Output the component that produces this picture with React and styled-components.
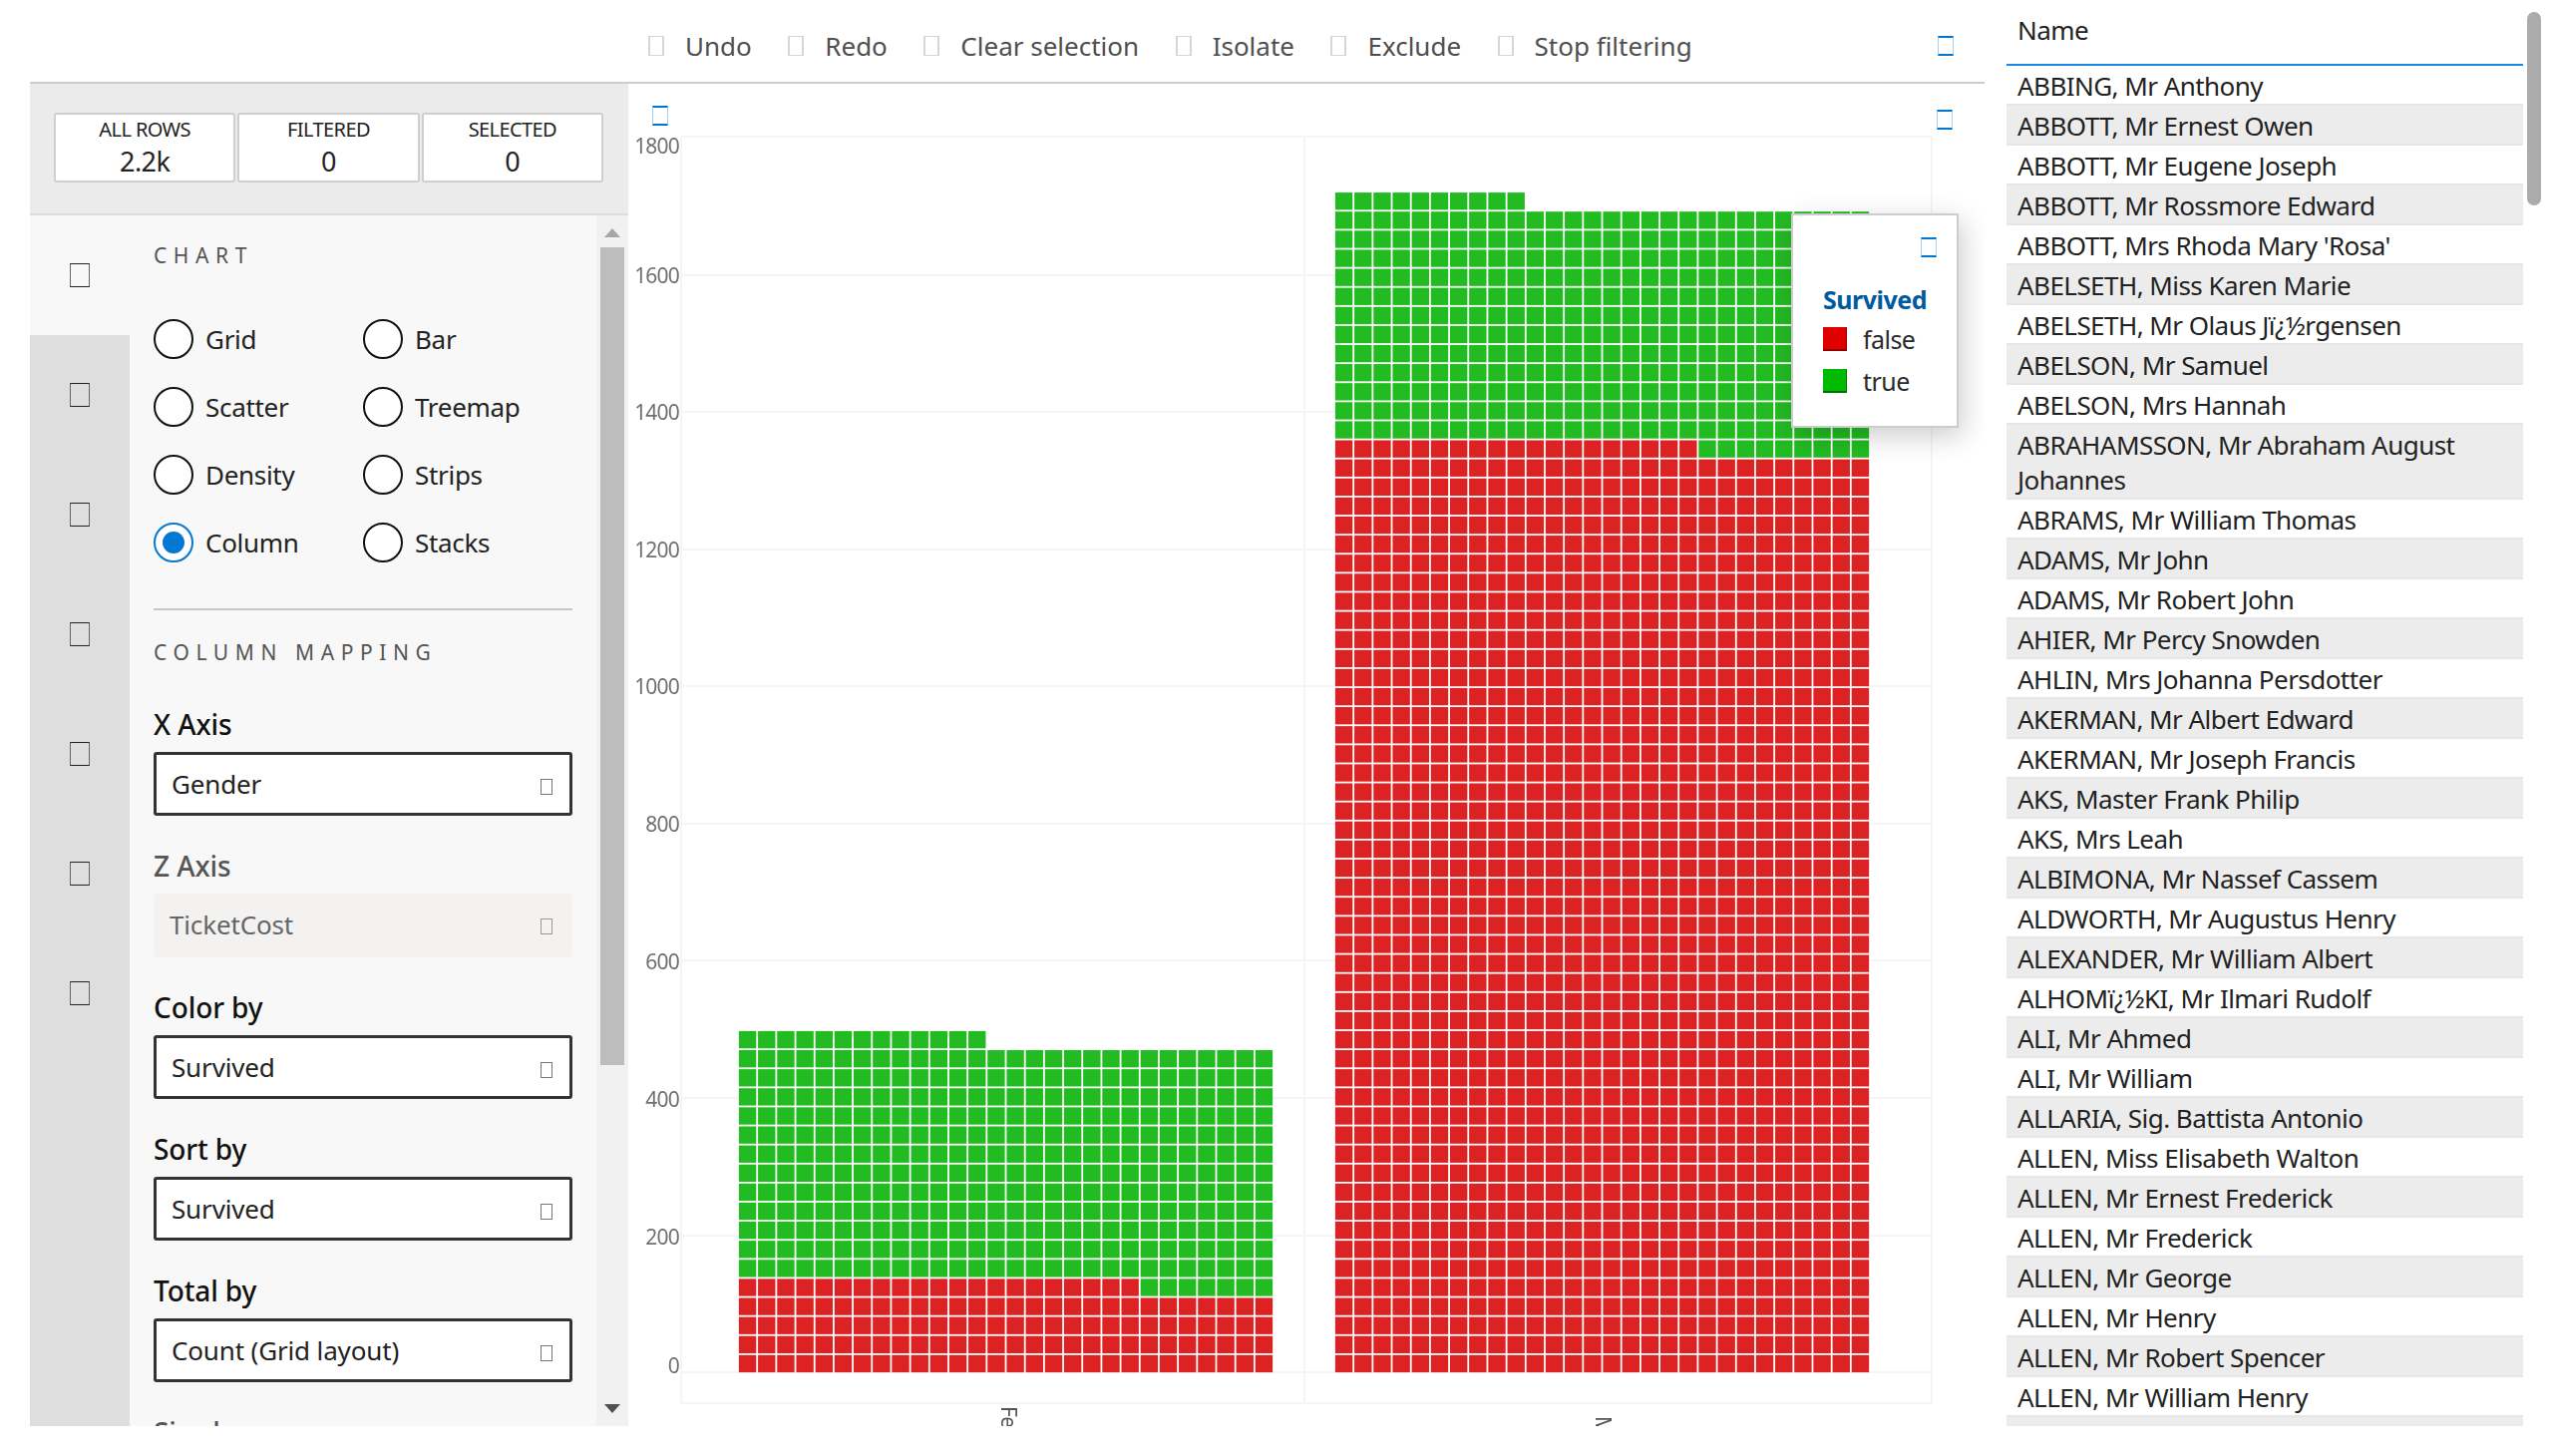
import React from "react";
import styled, { createGlobalStyle } from "styled-components";

const GlobalStyle = createGlobalStyle`
    html, body {
        margin: 0;
        background: #fff;
    }
    * {
        box-sizing: border-box;
    }
`;

const Page = styled.div`
    display: flex;
    height: 1430px;
    padding-left: 30px;
    overflow: hidden;
    font-family: "Noto Sans", "Open Sans", sans-serif;
    font-size: 26px;
    letter-spacing: -0.55px;
    color: #222;
`;

const Main = styled.div`
    display: flex;
    flex-direction: column;
    width: 1960px;
    flex: none;
`;

const Toolbar = styled.div`
    display: flex;
    align-items: center;
    gap: 36.5px;
    height: 84px;
    padding: 10px 31px 0 620px;
    border-bottom: 2px solid #cccccc;
    letter-spacing: 0;
    color: #4f4f4f;
`;

const ToolItem = styled.div`
    display: flex;
    align-items: center;
    gap: 21px;
`;

const GlyphBox = styled.span`
    display: block;
    flex: none;
    width: ${(p) => p.$w || 16}px;
    height: ${(p) => p.$h || 20}px;
`;

const GreyGlyph = styled(GlyphBox)`
    border: solid #d6d6d6;
    border-width: 1px 2px;
`;

const BlueGlyph = styled(GlyphBox)`
    border-style: solid;
    border-color: #0078d4 #a9d0f2;
    border-width: 2px 1px;
`;

const TabGlyph = styled(GlyphBox)`
    border-style: solid;
    border-color: #222 #666;
    border-width: 1px;
`;

const ChevronGlyph = styled(GlyphBox)`
    margin-top: 5px;
    border: 1px solid ${(p) => (p.$muted ? "#999" : "#777")};
`;

const PushRight = styled.div`
    margin-left: auto;
`;

const Body = styled.div`
    display: flex;
    flex: 1;
    min-height: 0;
`;

const SidePanel = styled.div`
    display: flex;
    flex-direction: column;
    width: 600px;
    flex: none;
`;

const StatsBand = styled.div`
    display: flex;
    gap: 2px;
    height: 132px;
    padding: 29px 25px 0 24px;
    background: #ebebeb;
    border-bottom: 2px solid #dcdcdc;
`;

const StatBox = styled.div`
    display: flex;
    flex: 1;
    flex-direction: column;
    align-items: center;
    height: 70px;
    background: #fff;
    border: 2px solid #cfcfcf;
    border-radius: 3px;
    color: #222;
`;

const StatLabel = styled.div`
    font-size: 20px;
    line-height: 30px;
    letter-spacing: -0.6px;
`;

const StatValue = styled.div`
    font-size: 27px;
    line-height: 34px;
`;

const PanelBody = styled.div`
    display: flex;
    flex: 1;
    min-height: 0;
`;

const TabRail = styled.div`
    width: 100px;
    flex: none;
    background: #dedede;
`;

const Tab = styled.div`
    display: flex;
    align-items: center;
    justify-content: center;
    height: 120px;
    background: ${(p) => (p.$active ? "#f8f8f8" : "transparent")};
`;

const TabContent = styled.div`
    flex: 1;
    min-width: 0;
    padding: 28px 24px 0;
    background: #f8f8f8;
    overflow: hidden;
`;

const SectionTitle = styled.div`
    font-size: 21px;
    line-height: 24px;
    letter-spacing: 6.6px;
    color: #555;
`;

const RadioGrid = styled.div`
    display: grid;
    grid-template-columns: 210px 1fr;
    grid-auto-rows: 68px;
    margin-top: 38px;
`;

const RadioRow = styled.div`
    display: flex;
    align-items: center;
    gap: 12px;
    letter-spacing: -0.3px;
    color: #222;
`;

const RadioCircle = styled.span`
    position: relative;
    display: block;
    width: 40px;
    height: 40px;
    flex: none;
    border: 2px solid ${(p) => (p.$on ? "#0078d4" : "#111")};
    border-radius: 50%;
    background: #fff;

    &::after {
        content: "";
        display: ${(p) => (p.$on ? "block" : "none")};
        position: absolute;
        inset: 7px;
        border-radius: 50%;
        background: #0078d4;
    }
`;

const Divider = styled.div`
    height: 2px;
    margin: 32px 0 30px;
    background: #c8c8c8;
`;

const FieldList = styled.div`
    margin-top: 10px;
`;

const Field = styled.div`
    display: flex;
    flex-direction: column;
    justify-content: flex-end;
    height: 142px;
`;

const FieldLabel = styled.div`
    padding-bottom: 11px;
    font-size: 28px;
    font-weight: 500;
    line-height: 34px;
    letter-spacing: -0.1px;
    color: ${(p) => (p.$disabled ? "#555" : "#111")};
`;

const SelectBox = styled.div`
    display: flex;
    align-items: center;
    justify-content: space-between;
    height: 64px;
    padding: 0 17px ${(p) => (p.$disabled ? 3 : 0)}px ${(p) => (p.$disabled ? 13 : 15)}px;
    border-radius: 3px;
    border: 3px solid ${(p) => (p.$disabled ? "#f3f2f1" : "#333")};
    background: ${(p) => (p.$disabled ? "#f3f2f1" : "#fff")};
    letter-spacing: -0.15px;
    color: ${(p) => (p.$disabled ? "#666" : "#222")};
`;

const PanelScroll = styled.div`
    display: flex;
    flex-direction: column;
    align-items: center;
    width: 32px;
    flex: none;
    padding-top: 13px;
    background: #f1f1f1;
`;

const ScrollThumb = styled.div`
    width: 24px;
    height: 820px;
    margin: 10px 0 340px;
    background: #bdbdbd;
`;

const ScrollArrow = styled.svg`
    display: block;
    flex: none;
`;

const ChartArea = styled.div`
    position: relative;
    flex: 1;
    min-width: 0;
    overflow: hidden;
    background: #fff;
`;

const ChartSvg = styled.svg`
    display: block;
`;

const FloatGlyph = styled.div`
    position: absolute;
    left: ${(p) => p.$x}px;
    top: ${(p) => p.$y}px;
`;

const Legend = styled.div`
    position: absolute;
    left: 1166px;
    top: 130px;
    width: 168px;
    height: 215px;
    padding: 22px 0 0 30px;
    background: #fff;
    border: 2px solid #cccccc;
    box-shadow: 4px 8px 26px rgba(0, 0, 0, 0.2);
`;

const LegendClose = styled.div`
    display: flex;
    justify-content: flex-end;
    padding-right: 20px;
`;

const LegendTitle = styled.div`
    margin-top: 25px;
    font-size: 25px;
    line-height: 34px;
    font-weight: 700;
    letter-spacing: -0.5px;
    color: #005a9e;
`;

const LegendRow = styled.div`
    display: flex;
    align-items: center;
    gap: 16px;
    height: 42px;
    margin-top: ${(p) => (p.$first ? "2px" : "0")};
    font-size: 25px;
    color: #2a2a2a;
`;

const Swatch = styled.span`
    display: block;
    width: 24px;
    height: 24px;
    flex: none;
    background: ${(p) => p.$color};
    border-right: 1px solid ${(p) => p.$dark};
    border-bottom: 2px solid ${(p) => p.$dark};
`;

const NameColumn = styled.div`
    display: flex;
    width: 518px;
    flex: none;
    margin-left: 22px;
    flex-direction: column;
    overflow: hidden;
`;

const NameHeader = styled.div`
    flex: none;
    height: 66px;
    padding: 13px 11px 0;
    line-height: 34px;
    border-bottom: 2px solid #1a86e8;
    color: #222;
`;

const NameRow = styled.div`
    flex: none;
    min-height: 40px;
    padding: 3px 11px 0;
    line-height: 35px;
    background: ${(p) => (p.$odd ? "#ececec" : "#fff")};
    border-bottom: 2px solid #e6e6e6;
    color: #222;
`;

const ListScroll = styled.div`
    width: 14px;
    height: 194px;
    flex: none;
    margin: 12px 0 0 4px;
    border-radius: 7px;
    background: #ababab;
`;

const actions = ["Undo", "Redo", "Clear selection", "Isolate", "Exclude", "Stop filtering"];

const stats = [
    { label: "ALL ROWS", value: "2.2k" },
    { label: "FILTERED", value: "0" },
    { label: "SELECTED", value: "0" },
];

const chartTypes = [
    { name: "Grid" },
    { name: "Bar" },
    { name: "Scatter" },
    { name: "Treemap" },
    { name: "Density" },
    { name: "Strips" },
    { name: "Column", on: true },
    { name: "Stacks" },
];

const fields = [
    { label: "X Axis", value: "Gender" },
    { label: "Z Axis", value: "TicketCost", disabled: true },
    { label: "Color by", value: "Survived" },
    { label: "Sort by", value: "Survived" },
    { label: "Total by", value: "Count (Grid layout)" },
    { label: "Size by", value: "", disabled: true },
];

const names = [
    "ABBING, Mr Anthony",
    "ABBOTT, Mr Ernest Owen",
    "ABBOTT, Mr Eugene Joseph",
    "ABBOTT, Mr Rossmore Edward",
    "ABBOTT, Mrs Rhoda Mary 'Rosa'",
    "ABELSETH, Miss Karen Marie",
    "ABELSETH, Mr Olaus Jï¿½rgensen",
    "ABELSON, Mr Samuel",
    "ABELSON, Mrs Hannah",
    "ABRAHAMSSON, Mr Abraham August Johannes",
    "ABRAMS, Mr William Thomas",
    "ADAMS, Mr John",
    "ADAMS, Mr Robert John",
    "AHIER, Mr Percy Snowden",
    "AHLIN, Mrs Johanna Persdotter",
    "AKERMAN, Mr Albert Edward",
    "AKERMAN, Mr Joseph Francis",
    "AKS, Master Frank Philip",
    "AKS, Mrs Leah",
    "ALBIMONA, Mr Nassef Cassem",
    "ALDWORTH, Mr Augustus Henry",
    "ALEXANDER, Mr William Albert",
    "ALHOMï¿½KI, Mr Ilmari Rudolf",
    "ALI, Mr Ahmed",
    "ALI, Mr William",
    "ALLARIA, Sig. Battista Antonio",
    "ALLEN, Miss Elisabeth Walton",
    "ALLEN, Mr Ernest Frederick",
    "ALLEN, Mr Frederick",
    "ALLEN, Mr George",
    "ALLEN, Mr Henry",
    "ALLEN, Mr Robert Spencer",
    "ALLEN, Mr William Henry",
    "\u00a0",
];

const yTicks = [
    { text: "1800", y: 146 },
    { text: "1600", y: 276 },
    { text: "1400", y: 413 },
    { text: "1200", y: 551 },
    { text: "1000", y: 688 },
    { text: "800", y: 826 },
    { text: "600", y: 964 },
    { text: "400", y: 1102 },
    { text: "200", y: 1240 },
    { text: "0", y: 1369 },
];

const gridLines = [137, 276, 413, 551, 688, 826, 963, 1101, 1239, 1376, 1407];

const CELL_W = 19.18;
const CELL_H = 19.11;
const GREEN = "#22bb22";
const RED = "#dc2222";

// rows are counted from the bottom of the column
function buildCells(left, redRows, splitAt, greenRows, topCols) {
    const bottom = 1377;
    const cells = [];
    const total = redRows + 1 + greenRows + 1;
    for (let row = 0; row < total; row++) {
        const y = bottom - (row + 1) * CELL_H;
        const isTop = row === total - 1;
        const cols = isTop ? topCols : 28;
        for (let col = 0; col < cols; col++) {
            let fill = GREEN;
            if (row < redRows || (row === redRows && col < splitAt)) fill = RED;
            cells.push({ x: left + col * CELL_W, y, fill });
        }
    }
    return cells;
}

const femaleCells = buildCells(740, 4, 21, 12, 13);
const maleCells = buildCells(1338, 48, 19, 12, 10);

function Chart() {
    return (
        <ChartSvg width="1360" height="1346" viewBox="630 84 1360 1346">
            <defs>
                <filter id="soft" x="-2%" y="-2%" width="104%" height="104%">
                    <feGaussianBlur stdDeviation="0.7" />
                </filter>
                <filter id="softText">
                    <feGaussianBlur stdDeviation="0.6" />
                </filter>
            </defs>
            {gridLines.map((y) => (
                <line key={y} x1="683" x2="1937" y1={y} y2={y} stroke="#f5f5f5" strokeWidth="2" />
            ))}
            {[683, 1308, 1937].map((x) => (
                <line key={x} x1={x} x2={x} y1="137" y2="1407" stroke="#f5f5f5" strokeWidth="2" />
            ))}
            <g filter="url(#softText)" fontFamily="Noto Sans, sans-serif" fontSize="21" fill="#707070" textAnchor="end" letterSpacing="-0.8">
                {yTicks.map((t) => (
                    <text key={t.text} x="681" y={t.y + 8}>
                        {t.text}
                    </text>
                ))}
            </g>
            <g filter="url(#soft)">
                {[...femaleCells, ...maleCells].map((c) => (
                    <rect key={`${c.x}-${c.y}`} x={c.x + 0.9} y={c.y + 0.9} width={CELL_W - 1.8} height={CELL_H - 1.8} fill={c.fill} />
                ))}
            </g>
            <g filter="url(#softText)" fontFamily="Noto Sans, sans-serif" fontSize="21" fill="#555">
                <text transform="translate(1004 1410) rotate(90)">Female</text>
                <text transform="translate(1600 1420) rotate(90)">Male</text>
            </g>
        </ChartSvg>
    );
}

export default function App() {
    return (
        <Page>
            <GlobalStyle />
            <Main>
                <Toolbar>
                    {actions.map((a) => (
                        <ToolItem key={a}>
                            <GreyGlyph />
                            {a}
                        </ToolItem>
                    ))}
                    <PushRight>
                        <BlueGlyph />
                    </PushRight>
                </Toolbar>
                <Body>
                    <SidePanel>
                        <StatsBand>
                            {stats.map((s) => (
                                <StatBox key={s.label}>
                                    <StatLabel>{s.label}</StatLabel>
                                    <StatValue>{s.value}</StatValue>
                                </StatBox>
                            ))}
                        </StatsBand>
                        <PanelBody>
                            <TabRail>
                                {[0, 1, 2, 3, 4, 5, 6, 7, 8].map((i) => (
                                    <Tab key={i} $active={i === 0}>
                                        {i < 7 && <TabGlyph $w={20} $h={24} />}
                                    </Tab>
                                ))}
                            </TabRail>
                            <TabContent>
                                <SectionTitle>CHART</SectionTitle>
                                <RadioGrid>
                                    {chartTypes.map((c) => (
                                        <RadioRow key={c.name}>
                                            <RadioCircle $on={c.on} />
                                            {c.name}
                                        </RadioRow>
                                    ))}
                                </RadioGrid>
                                <Divider />
                                <SectionTitle>COLUMN MAPPING</SectionTitle>
                                <FieldList>
                                    {fields.map((f) => (
                                        <Field key={f.label}>
                                            <FieldLabel $disabled={f.disabled}>{f.label}</FieldLabel>
                                            <SelectBox $disabled={f.disabled}>
                                                {f.value}
                                                <ChevronGlyph $w={12} $h={16} $muted={f.disabled} />
                                            </SelectBox>
                                        </Field>
                                    ))}
                                </FieldList>
                            </TabContent>
                            <PanelScroll>
                                <ScrollArrow width="16" height="9" viewBox="0 0 16 9">
                                    <polygon points="8,0 16,9 0,9" fill="#a6a6a6" />
                                </ScrollArrow>
                                <ScrollThumb />
                                <ScrollArrow width="16" height="9" viewBox="0 0 16 9">
                                    <polygon points="0,0 16,0 8,9" fill="#505050" />
                                </ScrollArrow>
                            </PanelScroll>
                        </PanelBody>
                    </SidePanel>
                    <ChartArea>
                        <Chart />
                        <FloatGlyph $x={24} $y={22}>
                            <BlueGlyph />
                        </FloatGlyph>
                        <FloatGlyph $x={1312} $y={26}>
                            <BlueGlyph />
                        </FloatGlyph>
                        <Legend>
                            <LegendClose>
                                <BlueGlyph />
                            </LegendClose>
                            <LegendTitle>Survived</LegendTitle>
                            <LegendRow $first>
                                <Swatch $color="#e00000" $dark="#8a0000" />
                                false
                            </LegendRow>
                            <LegendRow>
                                <Swatch $color="#00bb00" $dark="#007000" />
                                true
                            </LegendRow>
                        </Legend>
                    </ChartArea>
                </Body>
            </Main>
            <NameColumn>
                <NameHeader>Name</NameHeader>
                {names.map((n, i) => (
                    <NameRow key={i} $odd={i % 2 === 1}>
                        {n}
                    </NameRow>
                ))}
            </NameColumn>
            <ListScroll />
        </Page>
    );
}
